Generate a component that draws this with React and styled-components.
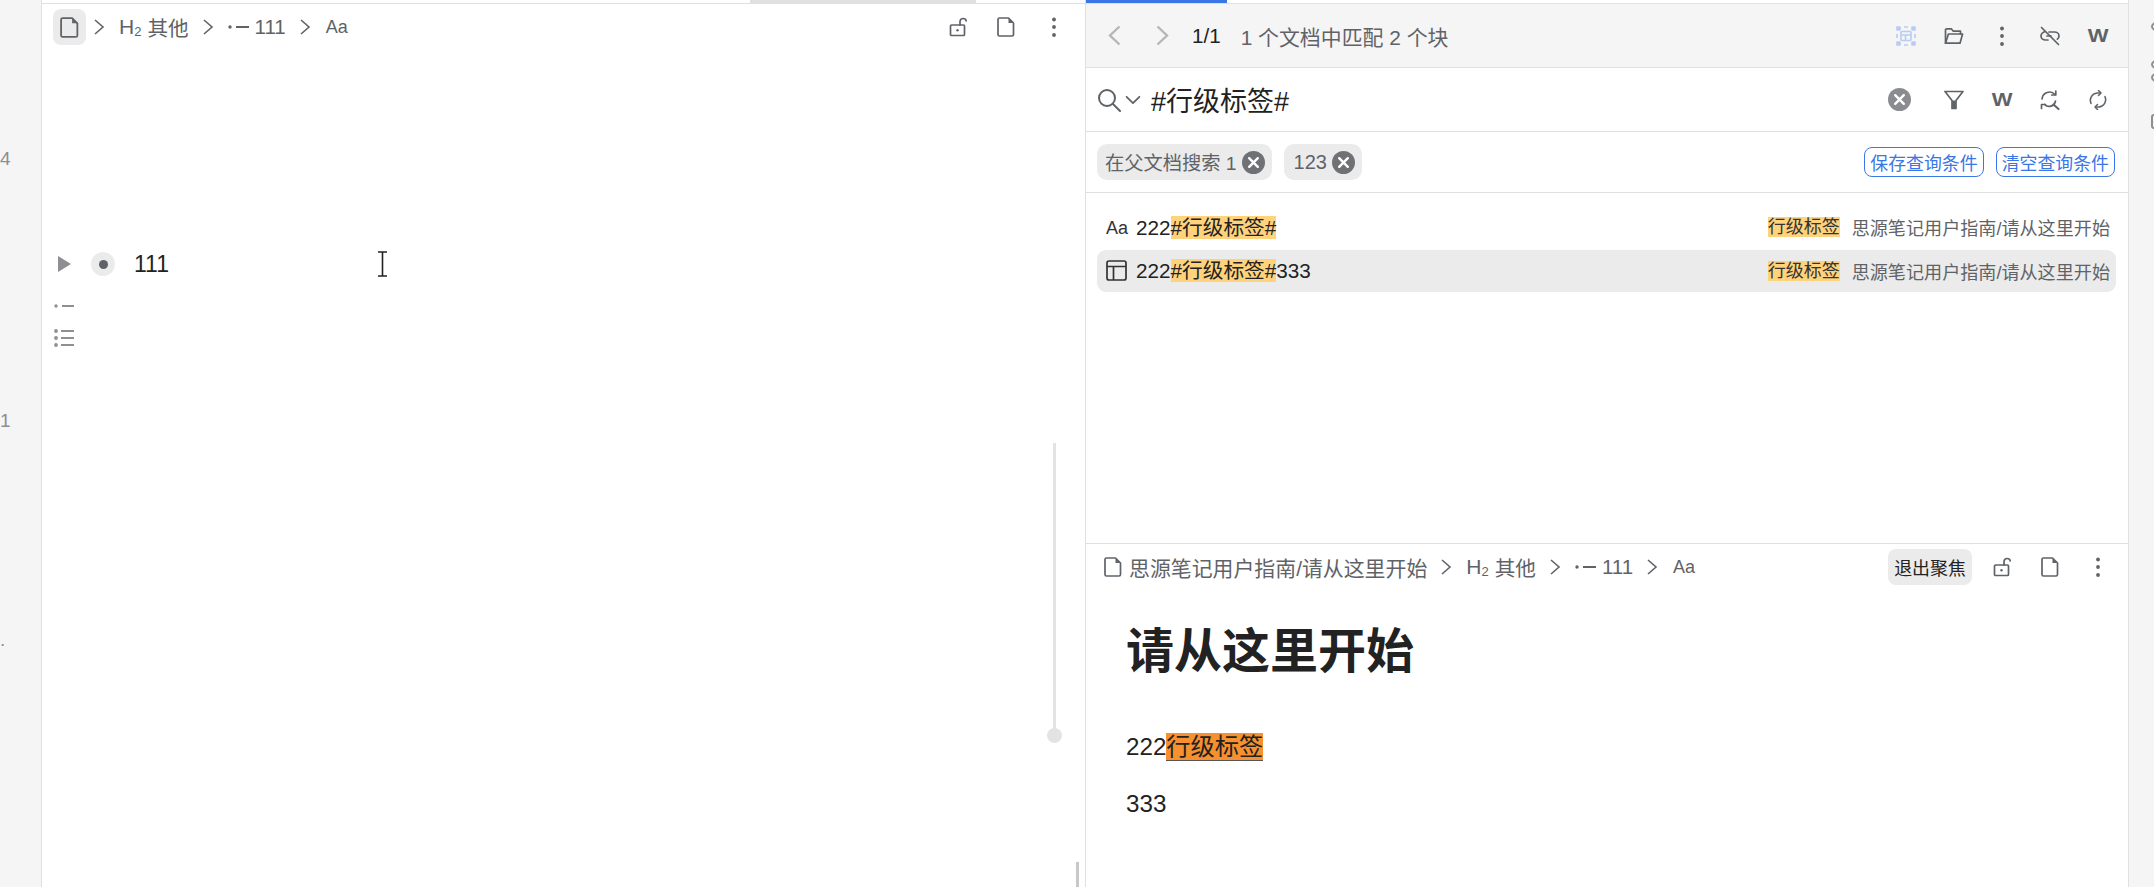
import React from 'react';
import styled, { createGlobalStyle } from 'styled-components';

const GlobalStyle = createGlobalStyle`
	html, body {
		margin: 0;
		padding: 0;
		overflow: hidden;
		background: #fff;
		font-family: "Liberation Sans", "Noto Sans CJK SC", sans-serif;
		color: #222;
	}
`;

const results = [
	{ id: 1, icon: 'aa', tail: '' },
	{ id: 2, icon: 'table', tail: '333', active: true },
];

const Svg = ({ size = 20, children, ...rest }) => (
	<svg width={size} height={size} viewBox="0 0 20 20" fill="none" stroke="#5f6368" strokeWidth="1.7" strokeLinecap="round" strokeLinejoin="round" {...rest}>
		{children}
	</svg>
);

const FileIcon = ({ size }) => (
	<Svg size={size}>
		<path d="M3.500 1h9l5 5v11.500a1.500 1.500 0 0 1-1.500 1.500H3.500A1.500 1.500 0 0 1 2 17.500v-15A1.500 1.500 0 0 1 3.500 1z" />
		<path d="M12.500 1l5 5h-5z" fill="#5f6368" stroke="none" />
	</Svg>
);

const LockIcon = () => (
	<Svg>
		<rect x="2.500" y="8" width="14" height="10.500" rx="1" />
		<circle cx="9.500" cy="13.200" r="1.200" fill="#5f6368" stroke="none" />
		<path d="M12 8V4.500A3.200 3.200 0 0 1 15.200 1.500c1.600 0 2.800 1 3 2.400" />
	</Svg>
);

const MoreIcon = () => (
	<Svg>
		<circle cx="10" cy="2.500" r="1.900" fill="#5f6368" stroke="none" />
		<circle cx="10" cy="10" r="1.900" fill="#5f6368" stroke="none" />
		<circle cx="10" cy="18" r="1.900" fill="#5f6368" stroke="none" />
	</Svg>
);

const Chevron = () => (
	<Svg strokeWidth="1.600" strokeLinecap="butt" strokeLinejoin="miter">
		<path d="M6 3l8 7-8 7" />
	</Svg>
);

const NavChevron = ({ left }) => (
	<svg width="14" height="21" viewBox="0 0 14 21" fill="none" stroke="#b4b6b9" strokeWidth="2.400">
		<path d={left ? 'M12.500 1.500L3 10.500l9.500 9' : 'M1.500 1.500l9.500 9-9.500 9'} />
	</svg>
);

const ItemIcon = ({ color = '#5f6368', width = 21 }) => (
	<svg width={width} height="8" viewBox={`0 0 ${width} 8`}>
		<circle cx="2" cy="4" r="1.700" fill={color} />
		<rect x="8" y="3" width={width - 8} height="2" fill={color} />
	</svg>
);

const ListIcon = () => (
	<svg width="20" height="18" viewBox="0 0 20 18" fill="#8d8f92">
		<circle cx="2" cy="2" r="1.900" />
		<rect x="7" y="1" width="13" height="2" />
		<circle cx="2" cy="9" r="1.900" />
		<rect x="7" y="8" width="13" height="2" />
		<circle cx="2" cy="16" r="1.900" />
		<rect x="7" y="15" width="13" height="2" />
	</svg>
);

const FocusIcon = () => (
	<Svg stroke="#b9cbf3" strokeWidth="1.600" strokeLinecap="butt">
		<path d="M1 1h3v3H1zM16 1h3v3h-3zM1 16h3v3H1zM16 16h3v3h-3z" fill="#b9cbf3" />
		<path d="M8 1h4M8 19h4M1 8v4M19 8v4" />
		<rect x="5" y="5.500" width="10" height="9" rx="1" />
		<path d="M5 9h10M9.500 9v5.500" />
	</Svg>
);

const FolderIcon = () => (
	<Svg>
		<path d="M1.500 17V4a1.200 1.200 0 0 1 1.200-1.200h4.600l2 2.400h7.200V8" />
		<path d="M1.500 17.200L4.400 8h14.200l-2.600 9.200z" />
	</Svg>
);

const UnlinkIcon = () => (
	<Svg>
		<path d="M1.500 1.500l17 17" />
		<path d="M5 5.500C2.500 6.500 1 8.300 1 10c0 2.400 2 4 4.500 4H8" />
		<path d="M9 6h5.500c2.500 0 4.500 1.700 4.500 4 0 1.300-.6 2.400-1.600 3.200" />
		<path d="M7 10h4" />
	</Svg>
);

const RoundClear = ({ fill }) => (
	<svg width="23" height="23" viewBox="0 0 24 24">
		<circle cx="12" cy="12" r="12" fill={fill} />
		<path d="M7.500 7.500l9 9M16.500 7.500l-9 9" stroke="#fff" strokeWidth="2.500" strokeLinecap="round" />
	</svg>
);

const FilterIcon = () => (
	<Svg>
		<path d="M1 1.500h18l-7 9v8h-4v-8z" />
		<path d="M8.200 10.500h3.600v8.500H8.200z" fill="#5f6368" stroke="none" />
	</Svg>
);

const ReplaceIcon = () => (
	<Svg>
		<path d="M2 9a7.500 7.500 0 0 1 13-4.500" />
		<path d="M15.800 1v4h-4" />
		<path d="M15.500 11a6.500 6.500 0 0 1-11 3.500" />
		<path d="M1.500 18.500v-4h4" />
		<path d="M13.500 14.500l5 4.500" strokeWidth="2" />
	</Svg>
);

const RefreshIcon = () => (
	<Svg strokeWidth="1.500">
		<path d="M3 13.500A7.500 7.500 0 0 1 9 3h3" />
		<path d="M10.500.5L13 3l-2.500 2.500" />
		<path d="M17 6.500A7.500 7.500 0 0 1 11 17H8" />
		<path d="M9.500 14.500L7 17l2.500 2.500" />
	</Svg>
);

const SearchIcon = () => (
	<svg width="24" height="24" viewBox="0 0 24 24" fill="none" stroke="#5f6368" strokeWidth="2" strokeLinecap="round">
		<circle cx="10" cy="10" r="8" />
		<path d="M16 16l7 7" />
	</svg>
);

const TableIcon = () => (
	<svg width="21" height="21" viewBox="0 0 21 21" fill="none" stroke="#333" strokeWidth="1.700">
		<rect x="1" y="1" width="19" height="19" rx="2" />
		<path d="M1 6.500h19M7.500 6.500V20" />
	</svg>
);

const CursorIcon = () => (
	<svg width="11" height="26" viewBox="0 0 11 26" fill="none" stroke="#222" strokeWidth="1.600">
		<path d="M1 1h9M1 25h9M5.500 1v24" />
	</svg>
);

const Crumbs = () => (
	<>
		<CrumbChevron><Chevron /></CrumbChevron>
		<CrumbText><Heading>H<sub>2</sub></Heading>其他</CrumbText>
		<CrumbChevron><Chevron /></CrumbChevron>
		<CrumbText><ItemIcon /><CrumbNumber>111</CrumbNumber></CrumbText>
		<CrumbChevron><Chevron /></CrumbChevron>
		<CrumbSmall>Aa</CrumbSmall>
	</>
);

const App = () => {
	return (
		<Page>
			<GlobalStyle />

			<Gutter>
				<GutterMark $top={147}>4</GutterMark>
				<GutterMark $top={238}>1</GutterMark>
				<GutterMark $top={195}>.</GutterMark>
			</Gutter>

			<LeftPanel>
				<Progress><ProgressFill $left={708} $width={226} $color="#dfe0e1" /></Progress>

				<BreadBar>
					<CrumbButton $active><FileIcon size={21} /></CrumbButton>
					<Crumbs />
					<Spacer />
					<ToolGroup>
						<ToolIcon><LockIcon /></ToolIcon>
						<ToolIcon><FileIcon /></ToolIcon>
						<ToolIcon><MoreIcon /></ToolIcon>
					</ToolGroup>
				</BreadBar>

				<BlockRow>
					<Fold />
					<Bullet><BulletDot /></Bullet>
					<BlockText>111</BlockText>
					<CursorBox><CursorIcon /></CursorBox>
				</BlockRow>
				<MiniIcons>
					<ItemIcon color="#8d8f92" width={20} />
					<ListIcon />
				</MiniIcons>

				<SliderTrack><SliderKnob /></SliderTrack>
				<ScrollMark />
			</LeftPanel>

			<RightPanel>
				<Progress><ProgressFill $left={0} $width={141} $color="#3b76e6" /></Progress>

				<SearchToolbar>
					<NavButton><NavChevron left /></NavButton>
					<NavButton><NavChevron /></NavButton>
					<PageCount>1/1</PageCount>
					<MatchCount>1 个文档中匹配 2 个块</MatchCount>
					<Spacer />
					<ToolGroup>
						<ToolIcon><FocusIcon /></ToolIcon>
						<ToolIcon><FolderIcon /></ToolIcon>
						<ToolIcon><MoreIcon /></ToolIcon>
						<ToolIcon><UnlinkIcon /></ToolIcon>
						<ToolIcon><WordMark>W</WordMark></ToolIcon>
					</ToolGroup>
				</SearchToolbar>

				<SearchRow>
					<SearchIcon />
					<SearchCaret><Svg size={16} strokeWidth="2.200"><path d="M2 6l8 8 8-8" /></Svg></SearchCaret>
					<SearchText>#行级标签#</SearchText>
					<Spacer />
					<ToolGroup>
						<ToolIcon $spaced><RoundClear fill="#8a8c90" /></ToolIcon>
						<ToolIcon><FilterIcon /></ToolIcon>
						<ToolIcon><WordMark>W</WordMark></ToolIcon>
						<ToolIcon><ReplaceIcon /></ToolIcon>
						<ToolIcon><RefreshIcon /></ToolIcon>
					</ToolGroup>
				</SearchRow>

				<ChipRow>
					<Chip>在父文档搜索 1<RoundClear fill="#6f7175" /></Chip>
					<Chip $wide>123<RoundClear fill="#6f7175" /></Chip>
					<Spacer />
					<OutlineButton>保存查询条件</OutlineButton>
					<OutlineButton>清空查询条件</OutlineButton>
				</ChipRow>

				<ResultList>
					{results.map(item => (
						<ResultRow key={item.id} $active={item.active}>
							<ResultIcon>
								{item.icon === 'aa' ? <AaMark>Aa</AaMark> : <TableIcon />}
							</ResultIcon>
							<ResultText>222<Mark>#行级标签#</Mark>{item.tail}</ResultText>
							<Spacer />
							<ResultTag>行级标签</ResultTag>
							<ResultPath>思源笔记用户指南/请从这里开始</ResultPath>
						</ResultRow>
					))}
				</ResultList>

				<Preview>
					<PreviewBar>
						<FileIcon />
						<PathText>思源笔记用户指南/请从这里开始</PathText>
						<Crumbs />
						<Spacer />
						<ExitButton>退出聚焦</ExitButton>
						<ToolGroup>
							<ToolIcon><LockIcon /></ToolIcon>
							<ToolIcon><FileIcon /></ToolIcon>
							<ToolIcon><MoreIcon /></ToolIcon>
						</ToolGroup>
					</PreviewBar>
					<DocBody>
						<DocTitle>请从这里开始</DocTitle>
						<DocLine>222<InlineTag>行级标签</InlineTag></DocLine>
						<DocLine>333</DocLine>
					</DocBody>
				</Preview>
			</RightPanel>

			<RightGutter>
				<GutterGlyph $top={22} $height={9} $round />
				<GutterGlyph $top={29} $height={9} $round />
				<GutterGlyph $top={4} $height={9} $round />
				<GutterGlyph $top={32} $height={15} />
			</RightGutter>
		</Page>
	);
};

const Page = styled.div`
	display: flex;
	width: 2154px;
	height: 887px;
	overflow: hidden;
	background: #fff;
`;

const Gutter = styled.div`
	flex: 0 0 41px;
	display: flex;
	flex-direction: column;
	background: #f5f5f5;
	border-right: 1px solid #e0e0e0;
`;

const GutterMark = styled.div`
	margin-top: ${p => p.$top}px;
	height: 24px;
	line-height: 24px;
	font-size: 19px;
	color: #8d8f92;
`;

const LeftPanel = styled.div`
	position: relative;
	flex: 0 0 1043px;
	display: flex;
	flex-direction: column;
	border-right: 1px solid #e0e0e0;
`;

const Progress = styled.div`
	height: 3px;
	display: flex;
	border-bottom: 1px solid #e0e0e0;
`;

const ProgressFill = styled.div`
	margin-left: ${p => p.$left}px;
	width: ${p => p.$width}px;
	background: ${p => p.$color};
`;

const BreadBar = styled.div`
	display: flex;
	align-items: center;
	height: 36px;
	margin-top: 5px;
	padding: 0 21px 0 11px;
`;

const CrumbButton = styled.div`
	display: flex;
	align-items: center;
	justify-content: center;
	width: 33px;
	height: 36px;
	margin-right: -6px;
	border-radius: 8px;
	background: ${p => p.$active ? '#ebebeb' : 'transparent'};
`;

const CrumbChevron = styled.span`
	display: flex;
	align-items: center;
	margin: 0 10px 0 9px;
`;

const CrumbText = styled.span`
	display: inline-flex;
	align-items: center;
	gap: 6px;
	font-size: 20.600px;
	color: #5f6368;
	white-space: nowrap;
`;

const Heading = styled.span`
	font-size: 21px;
	& sub { font-size: 13px; vertical-align: -2px; line-height: 0; }
`;

const CrumbNumber = styled.span`
	font-size: 20.500px;
`;

const CrumbSmall = styled.span`
	margin-left: 1px;
	font-size: 18px;
	color: #5f6368;
`;

const Spacer = styled.div`
	flex: 1;
`;

const ToolGroup = styled.div`
	display: flex;
	align-items: center;
	gap: 28px;
`;

const ToolIcon = styled.div`
	display: flex;
	align-items: center;
	justify-content: center;
	width: 20px;
	height: 24px;
	margin-right: ${p => p.$spaced ? 7 : 0}px;
	& > svg { flex: none; }
`;

const BlockRow = styled.div`
	display: flex;
	align-items: center;
	height: 36px;
	margin-top: 201px;
	padding-left: 16px;
`;

const Fold = styled.div`
	width: 0;
	height: 0;
	border-left: 13px solid #8d8f92;
	border-top: 8px solid transparent;
	border-bottom: 8px solid transparent;
`;

const Bullet = styled.div`
	display: flex;
	align-items: center;
	justify-content: center;
	width: 24px;
	height: 24px;
	margin-left: 20px;
	border-radius: 50%;
	background: #ebebeb;
`;

const BulletDot = styled.div`
	width: 9px;
	height: 9px;
	border-radius: 50%;
	background: #5f6368;
`;

const BlockText = styled.div`
	margin-left: 19px;
	font-size: 23px;
	width: 243px;
`;

const CursorBox = styled.div`
	display: flex;
`;

const MiniIcons = styled.div`
	display: flex;
	flex-direction: column;
	gap: 19px;
	margin-top: 20px;
	padding-left: 12px;
`;

const SliderTrack = styled.div`
	position: absolute;
	left: 1011px;
	top: 443px;
	width: 3px;
	height: 292px;
	background: #e3e3e3;
`;

const SliderKnob = styled.div`
	position: absolute;
	left: -6px;
	bottom: -8px;
	width: 15px;
	height: 15px;
	border-radius: 50%;
	background: #e3e3e3;
`;

const ScrollMark = styled.div`
	position: absolute;
	left: 1034px;
	top: 862px;
	width: 3px;
	height: 25px;
	background: #c8c8c8;
`;

const RightPanel = styled.div`
	flex: 0 0 1042px;
	display: flex;
	flex-direction: column;
	border-right: 1px solid #e0e0e0;
`;

const SearchToolbar = styled.div`
	display: flex;
	align-items: center;
	height: 63px;
	padding: 0 20px 0 21px;
	background: #f5f5f5;
	border-bottom: 1px solid #e0e0e0;
`;

const NavButton = styled.div`
	display: flex;
	align-items: center;
	justify-content: center;
	width: 14px;
	margin-right: 35px;
`;

const PageCount = styled.span`
	font-size: 20.600px;
	margin-left: -13px;
`;

const MatchCount = styled.span`
	margin-left: 20px;
	font-size: 20.900px;
	color: #5f6368;
`;

const WordMark = styled.span`
	font-size: 22px;
	font-weight: 700;
	color: #5f6368;
	transform: scaleY(0.85);
`;

const SearchRow = styled.div`
	display: flex;
	align-items: center;
	height: 63px;
	padding: 0 20px 0 11px;
	border-bottom: 1px solid #e0e0e0;
`;

const SearchCaret = styled.span`
	display: flex;
	margin-left: 4px;
`;

const SearchText = styled.span`
	margin-left: 10px;
	font-size: 27px;
`;

const ChipRow = styled.div`
	display: flex;
	align-items: center;
	gap: 12px;
	height: 60px;
	padding: 0 13px 0 11px;
	border-bottom: 1px solid #e0e0e0;
`;

const Chip = styled.div`
	display: flex;
	align-items: center;
	gap: 5px;
	height: 36px;
	padding: 0 7px 0 ${p => p.$wide ? 10 : 8}px;
	border-radius: 10px;
	background: #ebebeb;
	font-size: ${p => p.$wide ? 20 : 19.250}px;
	color: #5f6368;
	white-space: nowrap;
`;

const OutlineButton = styled.div`
	display: flex;
	align-items: center;
	height: 28px;
	padding: 0 5px;
	border: 1px solid #3b76e6;
	border-radius: 8px;
	font-size: 17.900px;
	color: #3b76e6;
	white-space: nowrap;
`;

const ResultList = styled.div`
	flex: 0 0 350px;
	display: flex;
	flex-direction: column;
	gap: 1px;
	padding: 15px 12px 0 11px;
	box-sizing: border-box;
`;

const ResultRow = styled.div`
	display: flex;
	align-items: center;
	height: ${p => p.$active ? 42 : 41}px;
	padding: 0 6px ${p => p.$active ? 1 : 3}px 9px;
	box-sizing: border-box;
	border-radius: 9px;
	background: ${p => p.$active ? '#ebebeb' : 'transparent'};
`;

const ResultIcon = styled.div`
	display: flex;
	align-items: center;
	width: 30px;
`;

const AaMark = styled.span`
	margin-top: 3px;
	font-size: 18px;
	color: #333;
`;

const ResultText = styled.span`
	margin-bottom: 3px;
	font-size: 20.700px;
	color: #222;
	white-space: nowrap;
`;

const Mark = styled.span`
	background: #ffd27c;
`;

const ResultTag = styled.span`
	background: #ffd27c;
	font-size: 18px;
	line-height: 20px;
	color: #333;
`;

const ResultPath = styled.span`
	margin-left: 12px;
	font-size: 18.100px;
	color: #5f6368;
	white-space: nowrap;
`;

const Preview = styled.div`
	flex: 1;
	border-top: 1px solid #e0e0e0;
`;

const PreviewBar = styled.div`
	display: flex;
	align-items: center;
	height: 36px;
	margin-top: 5px;
	padding: 0 20px 0 17px;
`;

const PathText = styled.span`
	margin-left: 6px;
	font-size: 20.900px;
	color: #5f6368;
	white-space: nowrap;
`;

const ExitButton = styled.div`
	display: flex;
	align-items: center;
	justify-content: center;
	width: 84px;
	height: 36px;
	margin-right: 20px;
	border-radius: 8px;
	background: #ebebeb;
	font-size: 17.900px;
	color: #222;
`;

const DocBody = styled.div`
	padding: 37px 0 0 40px;
`;

const DocTitle = styled.h1`
	margin: 0 0 44px;
	font-size: 48px;
	line-height: 60px;
	font-weight: 700;
	color: #222;
`;

const DocLine = styled.p`
	margin: 0 0 15px;
	height: 42px;
	line-height: 42px;
	font-size: 24.200px;
	color: #222;
`;

const InlineTag = styled.span`
	background: #f7902e;
	border-bottom: 1px solid #555;
`;

const RightGutter = styled.div`
	flex: 1;
	display: flex;
	flex-direction: column;
	background: #f5f5f5;
	padding-left: 22px;
`;

const GutterGlyph = styled.div`
	flex: none;
	margin-top: ${p => p.$top}px;
	width: 12px;
	height: ${p => p.$height}px;
	border: 2px solid #8d8f92;
	border-radius: ${p => p.$round ? '50%' : '3px'};
	box-sizing: border-box;
`;

export default App;
